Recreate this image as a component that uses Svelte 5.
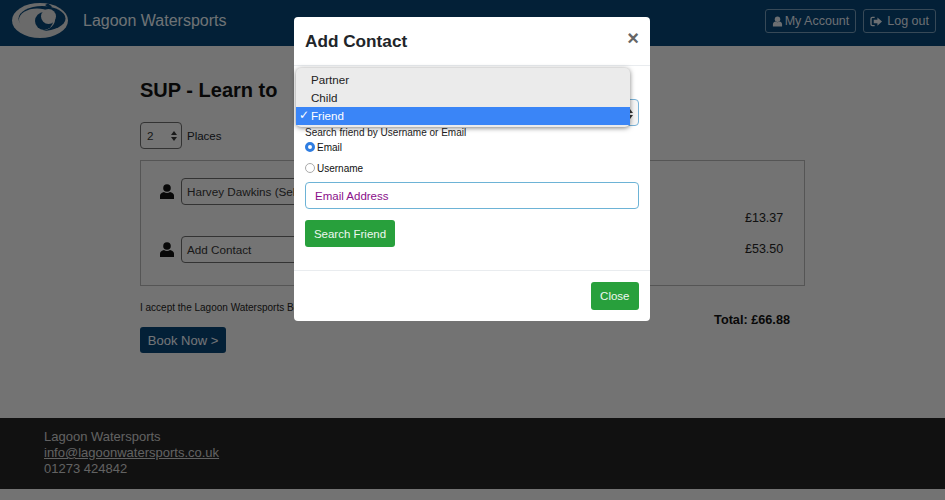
<script>
  const rows = [
    { label: 'Harvey Dawkins (Self)', price: '£13.37' },
    { label: 'Add Contact', price: '£53.50' }
  ];
  const options = ['Partner', 'Child', 'Friend'];
</script>

<div class="page">
  <header class="nav">
    <div class="brand">
      <svg class="logo" viewBox="0 0 56 36" aria-hidden="true">
        <ellipse cx="28" cy="17.5" rx="28" ry="17.5" fill="#d4d4d4" />
        <ellipse cx="30" cy="15.500" rx="23.500" ry="12.500" fill="#06406e" />
        <path d="M36 0.500 40 3.500 37 5 33 2Z" fill="#06406e" />
        <ellipse cx="25" cy="17" rx="18" ry="11.500" fill="#d4d4d4" />
        <circle cx="32" cy="18" r="9" fill="#06406e" />
        <circle cx="36.500" cy="13.500" r="7.500" fill="#d4d4d4" />
      </svg>
      <span class="brand-name">Lagoon Watersports</span>
    </div>
    <div class="nav-actions">
      <button class="nav-btn">
        <svg class="ico" viewBox="0 0 12 12" aria-hidden="true"><circle cx="6" cy="3.500" r="3" /><path d="M1 11.500V9c0-1.800 1.500-2.800 3-3 1 1 3 1 4 0 1.500.2 3 1.200 3 3v2.500Z" /></svg>
        My Account
      </button>
      <button class="nav-btn logout">
        <svg class="ico" viewBox="0 0 14 12" aria-hidden="true"><path d="M5 1.500H2.500A1.500 1.500 0 0 0 1 3v6a1.500 1.500 0 0 0 1.500 1.500H5" fill="none" stroke="currentColor" stroke-width="1.500" /><path d="M8 1.500 13 6l-5 4.500V8H4V4h4Z" /></svg>
        Log out
      </button>
    </div>
  </header>

  <main class="content">
    <h1>SUP - Learn to</h1>
    <div class="places">
      <div class="select small">2<span class="updown"></span></div>
      <span>Places</span>
    </div>
    <section class="box">
      {#each rows as row}
        <div class="row">
          <svg class="person" viewBox="0 0 14 15" aria-hidden="true"><circle cx="7" cy="4" r="3.800" /><path d="M0 15v-3.500C0 9.500 2 8.500 4 8c1.500 1.200 4.500 1.200 6 0 2 .5 4 1.500 4 3.500V15Z" /></svg>
          <div class="select wide">{row.label}</div>
          <span class="price">{row.price}</span>
        </div>
      {/each}
    </section>
    <div class="accept">
      <div class="accept-left">
        <p>I accept the Lagoon Watersports Booking Terms</p>
        <button class="book">Book Now &gt;</button>
      </div>
      <strong class="total">Total: £66.88</strong>
    </div>
  </main>

  <footer class="foot">
    <div>Lagoon Watersports</div>
    <a href="#top">info@lagoonwatersports.co.uk</a>
    <div>01273 424842</div>
  </footer>

  <div class="backdrop"></div>

  <div class="modal">
    <div class="modal-head">
      <h2>Add Contact</h2>
      <span class="close-x">×</span>
    </div>
    <div class="modal-body">
      <div class="select relation"><span class="updown dark"></span></div>
      <div class="search-label">Search friend by Username or Email</div>
      <label class="radio"><span class="dot on"></span>Email</label>
      <label class="radio"><span class="dot"></span>Username</label>
      <div class="input">Email Address</div>
      <button class="green">Search Friend</button>
    </div>
    <div class="modal-foot">
      <button class="green close">Close</button>
    </div>
    <ul class="menu">
      {#each options as o}
        <li class:active={o === 'Friend'}>{#if o === 'Friend'}<span class="tick">✓</span>{/if}{o}</li>
      {/each}
    </ul>
  </div>
</div>

<style>
  :global(body) {
    margin: 0;
    font-family: "Liberation Sans", Arial, sans-serif;
  }
  .page {
    position: relative;
    width: 945px;
    height: 500px;
    overflow: hidden;
    background: #e6e6e6;
    color: #212529;
    display: flex;
    flex-direction: column;
  }
  .nav {
    height: 46px;
    flex: none;
    box-sizing: border-box;
    background: #06406e;
    display: flex;
    align-items: center;
    justify-content: space-between;
    padding: 0 9px 4px 12px;
  }
  .brand { display: flex; align-items: center; gap: 15px; }
  .logo { width: 56px; height: 36px; display: block; }
  .brand-name { font-size: 16px; color: #dfe5ea; }
  .nav-actions { display: flex; gap: 7px; }
  .nav-btn {
    height: 24px;
    box-sizing: border-box;
    padding: 0 6px;
    font: 12.500px "Liberation Sans", Arial, sans-serif;
    color: #d8dfe5;
    background: transparent;
    border: 1px solid #6f93ae;
    border-radius: 3px;
    display: flex;
    align-items: center;
    gap: 2px;
  }
  .logout { gap: 4px; }
  .ico { width: 11px; height: 11px; fill: currentColor; }
  .logout .ico { width: 13px; }
  .content {
    width: 665px;
    margin-left: 140px;
    flex: 1;
    box-sizing: border-box;
  }
  h1 {
    margin: 31px 0 0;
    font-size: 20px;
    line-height: 26px;
    font-weight: 700;
    color: #111;
  }
  .places {
    display: flex;
    align-items: center;
    gap: 5px;
    margin-top: 19px;
    font-size: 11.500px;
  }
  .select {
    box-sizing: border-box;
    height: 27px;
    border: 1px solid #666;
    border-radius: 4px;
    background: #e8e8e8;
    display: flex;
    align-items: center;
    font-size: 11.700px;
    color: #333;
    padding-left: 5px;
    position: relative;
  }
  .small { width: 42px; padding-left: 6px; }
  .updown {
    position: absolute;
    right: 4px;
    top: 8px;
    width: 0;
    height: 0;
    border-left: 3px solid transparent;
    border-right: 3px solid transparent;
    border-bottom: 4px solid #333;
  }
  .updown::after {
    content: "";
    position: absolute;
    left: -3px;
    top: 6px;
    border-left: 3px solid transparent;
    border-right: 3px solid transparent;
    border-top: 4px solid #333;
  }
  .box {
    margin-top: 11px;
    height: 126px;
    box-sizing: border-box;
    border: 1px solid #aaa;
    padding-top: 17px;
    display: flex;
    flex-direction: column;
    gap: 31px;
  }
  .row {
    display: flex;
    align-items: center;
    height: 27px;
    padding-left: 19px;
    position: relative;
  }
  .person { width: 14px; height: 15px; fill: #111; margin-right: 7px; }
  .wide { width: 300px; }
  .price {
    position: absolute;
    left: 604px;
    font-size: 12.500px;
    color: #222;
  }
  .row:first-child .price { top: 33px; }
  .row:last-child .price { top: 6px; }
  .accept {
    display: flex;
    justify-content: space-between;
    padding-right: 15px;
    margin-top: 16px;
  }
  .accept p { margin: 0; font-size: 10px; line-height: 12px; color: #222; }
  .book {
    margin-top: 13px;
    height: 26px;
    width: 86px;
    padding: 0;
    border: 0;
    border-radius: 3px;
    background: #06406e;
    color: #e6eaee;
    font: 13px "Liberation Sans", Arial, sans-serif;
  }
  .total { font-size: 12.700px; margin-top: 11px; color: #111; }
  .foot {
    height: 71px;
    flex: none;
    margin-bottom: 11px;
    box-sizing: border-box;
    background: #222;
    padding: 11px 44px 0;
    font-size: 13px;
    line-height: 16px;
    color: #c4c4c4;
  }
  .foot a { color: #c4c4c4; text-decoration: underline; display: block; }
  .backdrop {
    position: absolute;
    inset: 0;
    background: rgba(0, 0, 0, 0.5);
  }
  .modal {
    position: absolute;
    left: 294px;
    top: 17px;
    width: 356px;
    height: 304px;
    background: #fff;
    border-radius: 4px;
    box-sizing: border-box;
    color: #111;
    display: flex;
    flex-direction: column;
  }
  .modal-head {
    height: 49px;
    box-sizing: border-box;
    border-bottom: 1px solid #e9ecef;
    padding: 0 11px;
    display: flex;
    align-items: center;
    justify-content: space-between;
  }
  h2 { margin: 0; font-size: 17.200px; font-weight: 700; color: #212529; }
  .close-x { font-size: 20px; font-weight: 700; color: #666; margin-bottom: 5px; }
  .modal-body { padding: 33px 11px 0; height: 205px; box-sizing: border-box; border-bottom: 1px solid #e9ecef; }
  .relation {
    border-color: #7ab3d8;
    background: #f5f5f5;
    width: 334px;
  }
  .updown.dark { right: 5px; top: 9px; }
  .search-label { font-size: 10px; line-height: 12px; color: #222; margin: 1px 0 -1px; }
  .radio {
    display: flex;
    align-items: center;
    gap: 2px;
    font-size: 10px;
    height: 18px;
    margin-bottom: 3px;
  }
  .dot {
    width: 10px;
    height: 10px;
    box-sizing: border-box;
    border-radius: 50%;
    border: 1px solid #aaa;
    background: #fff;
  }
  .dot.on { border: 3px solid #2f7de1; }
  .input {
    box-sizing: border-box;
    height: 27px;
    margin-top: 5px;
    border: 1px solid #6db3d6;
    border-radius: 4px;
    padding-left: 9px;
    display: flex;
    align-items: center;
    font-size: 11.500px;
    color: #8a0f8a;
  }
  .green {
    display: block;
    height: 27px;
    padding: 0 9.500px;
    border: 0;
    border-radius: 3px;
    background: #28a03c;
    color: #eef7ef;
    font: 11.500px "Liberation Sans", Arial, sans-serif;
  }
  .modal-body .green { margin-top: 11px; width: 90px; padding: 0; }
  .modal-foot { display: flex; justify-content: flex-end; padding: 11px 11px 0; }
  .close { height: 28px; }
  .menu {
    position: absolute;
    left: 2px;
    top: 51px;
    width: 334px;
    height: 59px;
    box-sizing: border-box;
    margin: 0;
    padding: 3px 0 0;
    list-style: none;
    background: #ebebeb;
    border-radius: 5px;
    box-shadow: 0 1px 5px rgba(0, 0, 0, 0.5);
    font-size: 11.600px;
    color: #222;
  }
  .menu li {
    position: relative;
    height: 18px;
    line-height: 18px;
    padding-left: 15px;
  }
  .menu li.active { background: #3a85f7; color: #fff; }
  .tick { position: absolute; left: 3px; top: -1px; font-size: 12px; font-family: "DejaVu Sans", sans-serif; }
</style>
